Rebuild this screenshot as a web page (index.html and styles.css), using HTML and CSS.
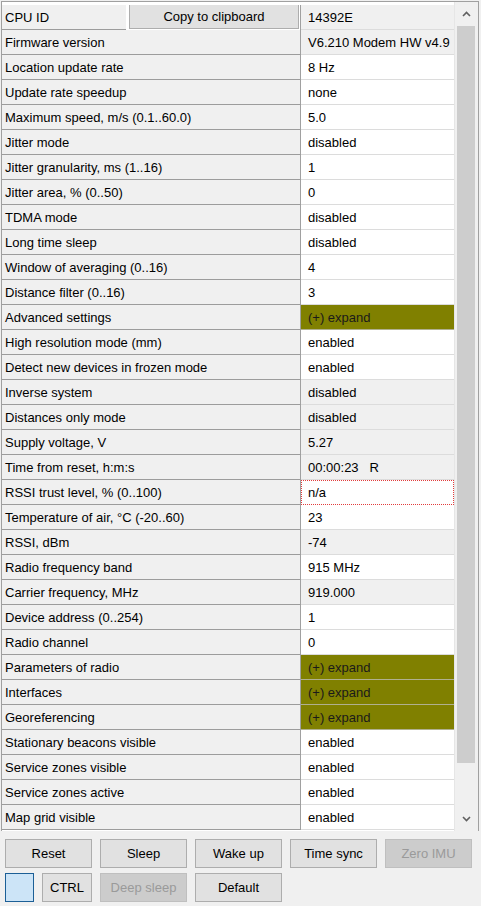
FILE: index.html
```html
<!DOCTYPE html>
<html>
<head>
<meta charset="utf-8">
<link rel="stylesheet" href="styles.css">
</head>
<body>
<div class="window">
  <div class="grid">
    <div class="rows">
      <div class="row">
        <div class="label split"><span class="label-text">CPU ID</span><button class="btn copy">Copy to clipboard</button></div>
        <div class="value ro">14392E</div>
      </div>
      <div class="row"><div class="label">Firmware version</div><div class="value ro">V6.210 Modem HW v4.9</div></div>
      <div class="row"><div class="label">Location update rate</div><div class="value">8 Hz</div></div>
      <div class="row"><div class="label">Update rate speedup</div><div class="value">none</div></div>
      <div class="row"><div class="label">Maximum speed, m/s (0.1..60.0)</div><div class="value">5.0</div></div>
      <div class="row"><div class="label">Jitter mode</div><div class="value">disabled</div></div>
      <div class="row"><div class="label">Jitter granularity, ms (1..16)</div><div class="value">1</div></div>
      <div class="row"><div class="label">Jitter area, % (0..50)</div><div class="value">0</div></div>
      <div class="row"><div class="label">TDMA mode</div><div class="value">disabled</div></div>
      <div class="row"><div class="label">Long time sleep</div><div class="value">disabled</div></div>
      <div class="row"><div class="label">Window of averaging (0..16)</div><div class="value">4</div></div>
      <div class="row"><div class="label">Distance filter (0..16)</div><div class="value">3</div></div>
      <div class="row"><div class="label">Advanced settings</div><div class="value expand">(+) expand</div></div>
      <div class="row"><div class="label">High resolution mode (mm)</div><div class="value">enabled</div></div>
      <div class="row"><div class="label">Detect new devices in frozen mode</div><div class="value">enabled</div></div>
      <div class="row"><div class="label">Inverse system</div><div class="value ro">disabled</div></div>
      <div class="row"><div class="label">Distances only mode</div><div class="value ro">disabled</div></div>
      <div class="row"><div class="label">Supply voltage, V</div><div class="value ro">5.27</div></div>
      <div class="row"><div class="label">Time from reset, h:m:s</div><div class="value ro pre">00:00:23   R</div></div>
      <div class="row"><div class="label">RSSI trust level, % (0..100)</div><div class="value focus">n/a</div></div>
      <div class="row"><div class="label">Temperature of air, °C (-20..60)</div><div class="value">23</div></div>
      <div class="row"><div class="label">RSSI, dBm</div><div class="value ro">-74</div></div>
      <div class="row"><div class="label">Radio frequency band</div><div class="value">915 MHz</div></div>
      <div class="row"><div class="label">Carrier frequency, MHz</div><div class="value ro">919.000</div></div>
      <div class="row"><div class="label">Device address (0..254)</div><div class="value">1</div></div>
      <div class="row"><div class="label">Radio channel</div><div class="value">0</div></div>
      <div class="row"><div class="label">Parameters of radio</div><div class="value expand">(+) expand</div></div>
      <div class="row"><div class="label">Interfaces</div><div class="value expand">(+) expand</div></div>
      <div class="row"><div class="label">Georeferencing</div><div class="value expand">(+) expand</div></div>
      <div class="row"><div class="label">Stationary beacons visible</div><div class="value">enabled</div></div>
      <div class="row"><div class="label">Service zones visible</div><div class="value">enabled</div></div>
      <div class="row"><div class="label">Service zones active</div><div class="value">enabled</div></div>
      <div class="row"><div class="label">Map grid visible</div><div class="value">enabled</div></div>
    </div>
    <div class="scrollbar">
      <div class="arrow"><svg width="9" height="6" viewBox="0 0 9 6"><path d="M1 5 L4.5 1.5 L8 5" fill="none" stroke="#606060" stroke-width="1.6"/></svg></div>
      <div class="thumb"></div>
      <div class="track"></div>
      <div class="arrow"><svg width="9" height="6" viewBox="0 0 9 6"><path d="M1 1 L4.5 4.5 L8 1" fill="none" stroke="#606060" stroke-width="1.6"/></svg></div>
    </div>
  </div>
  <div class="buttons">
    <div class="btn-row">
      <button class="btn wide">Reset</button>
      <button class="btn wide">Sleep</button>
      <button class="btn wide">Wake up</button>
      <button class="btn wide">Time sync</button>
      <button class="btn wide" disabled>Zero IMU</button>
    </div>
    <div class="btn-row">
      <div class="swatch"></div>
      <button class="btn ctrl">CTRL</button>
      <button class="btn wide" disabled>Deep sleep</button>
      <button class="btn wide">Default</button>
    </div>
  </div>
</div>
</body>
</html>
```
FILE: styles.css
```css
html, body {
  margin: 0;
  padding: 0;
  background: #f0f0f0;
}
body {
  font-family: "Liberation Sans", Arial, sans-serif;
  font-size: 13px;
  color: #000;
}
.window {
  width: 481px;
  height: 906px;
  overflow: hidden;
}
.grid {
  display: flex;
  width: 478px;
  height: 830px;
  box-sizing: border-box;
  margin: 1px 0 0 1px;
  border: 1px solid #a0a0a0;
  border-bottom: none;
  background: #fff;
}
.rows {
  display: flex;
  flex-direction: column;
  padding-top: 3px;
  width: 452px;
}
.row {
  display: flex;
  height: 25px;
}
.label {
  flex: 0 0 299px;
  width: 299px;
  border-right: 1px solid #a0a0a0;
  border-bottom: 1px solid #9c9c9c;
  background: #f0f0f0;
  padding: 1px 0 0 3px;
  line-height: 23px;
  box-sizing: border-box;
  white-space: nowrap;
  overflow: hidden;
}
.label.split {
  display: flex;
  padding: 0;
  border-bottom: none;
  background: #fff;
}
.label-text {
  flex: 0 0 124px;
  padding: 1px 0 0 3px;
  line-height: 23px;
  box-sizing: border-box;
  background: #f0f0f0;
  border-bottom: 1px solid #9c9c9c;
}
.value {
  flex: 1;
  padding: 1px 0 0 7px;
  line-height: 23px;
  border-bottom: 1px solid #dcdcdc;
  white-space: nowrap;
  overflow: hidden;
  box-sizing: border-box;
}
.value.ro {
  background: #f0f0f0;
}
.value.pre {
  white-space: pre;
}
.value.expand {
  background: #808000;
  color: #1a1a1a;
  border-bottom-color: #b0b090;
}
.value.focus {
  border-bottom: none;
  background:
    linear-gradient(90deg, #e23c3c 50%, transparent 50%) left top / 2px 1px repeat-x,
    linear-gradient(90deg, #e23c3c 50%, transparent 50%) left bottom / 2px 1px repeat-x,
    linear-gradient(180deg, #e23c3c 50%, transparent 50%) left top / 1px 2px repeat-y,
    linear-gradient(180deg, #e23c3c 50%, transparent 50%) right top / 1px 2px repeat-y,
    #fff;
}
.scrollbar {
  flex: 1;
  display: flex;
  flex-direction: column;
  background: #f0f0f0;
  padding: 0 3px 0 2px;
  border-left: 1px solid #e6e6e6;
}
.arrow {
  height: 24px;
  display: flex;
  align-items: center;
  justify-content: center;
}
.thumb {
  height: 737px;
  background: #cdcdcd;
}
.track {
  flex: 1;
}
.btn {
  font-family: "Liberation Sans", Arial, sans-serif;
  font-size: 13px;
  color: #000;
  background: #e1e1e1;
  border: 1px solid #adadad;
  padding: 0;
  margin: 0;
  height: 29px;
  box-sizing: border-box;
}
.btn:disabled {
  background: #cccccc;
  border-color: #bfbfbf;
  color: #9a9a9a;
}
.btn.copy {
  width: 170px;
  height: 26px;
  margin: -2px 0 0 3px;
}
.buttons {
  display: flex;
  flex-direction: column;
  gap: 5px;
  padding: 8px 0 0 5px;
}
.btn-row {
  display: flex;
  gap: 8px;
}
.btn.wide {
  width: 87px;
}
.btn.ctrl {
  width: 50px;
}
.swatch {
  width: 29px;
  height: 29px;
  box-sizing: border-box;
  background: #cce4f7;
  border: 1px solid #1c5f96;
}
```
